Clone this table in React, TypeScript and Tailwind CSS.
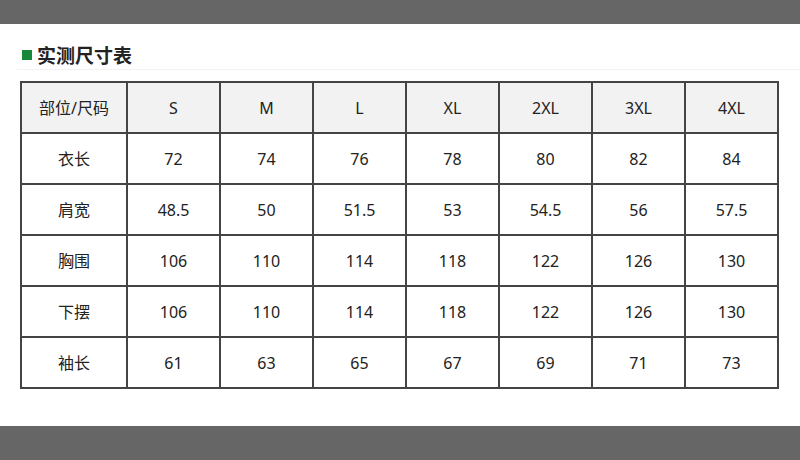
const sizes = ['S', 'M', 'L', 'XL', '2XL', '3XL', '4XL'];

const rows: [string, string[]][] = [
  ['衣长', ['72', '74', '76', '78', '80', '82', '84']],
  ['肩宽', ['48.5', '50', '51.5', '53', '54.5', '56', '57.5']],
  ['胸围', ['106', '110', '114', '118', '122', '126', '130']],
  ['下摆', ['106', '110', '114', '118', '122', '126', '130']],
  ['袖长', ['61', '63', '65', '67', '69', '71', '73']],
];

const font = { fontFamily: '"Noto Sans", "Noto Sans CJK SC", sans-serif' };

export default function App() {
  return (
    <div className="w-[800px] h-[460px] bg-white flex flex-col overflow-hidden text-[#222]" style={font}>
      <div className="h-[24px] bg-[#666666] shrink-0" />
      <div className="ml-[17px] mt-[19px] h-[27px] border-b border-[#f2f2f2] flex items-start">
        <div className="flex items-center pl-[5px]">
          <span className="w-[10px] h-[10px] bg-[#17883a] mr-[5px]" />
          <span className="text-[19px] leading-[24px] font-bold text-[#222]" style={{ fontFamily: '"Noto Sans CJK SC", sans-serif' }}>
            实测尺寸表
          </span>
        </div>
      </div>
      <div className="ml-[20px] mt-[11px]">
        <table className="table-fixed border-collapse w-[757px] text-[16px] text-center">
          <colgroup>
            <col className="w-[106px]" />
            {sizes.map((s) => (
              <col key={s} className="w-[93px]" />
            ))}
          </colgroup>
          <thead>
            <tr className="h-[51px] bg-[#f2f2f2]">
              <td className="border-2 border-[#444]">部位/尺码</td>
              {sizes.map((s) => (
                <td key={s} className="border-2 border-[#444]">{s}</td>
              ))}
            </tr>
          </thead>
          <tbody>
            {rows.map(([name, vals]) => (
              <tr key={name} className="h-[51px]">
                <td className="border-2 border-[#444]">{name}</td>
                {vals.map((v, i) => (
                  <td key={i} className="border-2 border-[#444]">{v}</td>
                ))}
              </tr>
            ))}
          </tbody>
        </table>
      </div>
      <div className="flex-1" />
      <div className="h-[34px] bg-[#666666] shrink-0" />
    </div>
  );
}
